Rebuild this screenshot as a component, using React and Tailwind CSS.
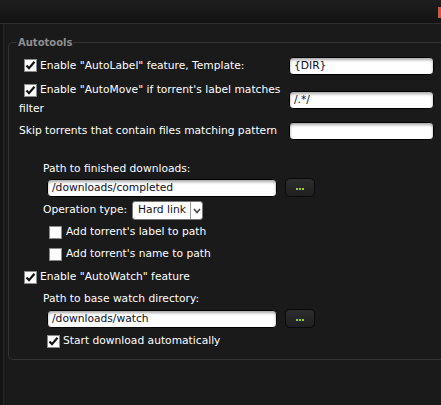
import React from "react";

function Check({ checked }) {
  return (
    <span className="inline-flex w-[13px] h-[13px] shrink-0 items-center justify-center bg-white border border-[#8a8a8a]">
      {checked && (
        <svg width="11" height="11" viewBox="0 0 11 11">
          <path d="M1.5 5.5 L4 8.2 L9.5 1.8" fill="none" stroke="#111" strokeWidth="2.2" />
        </svg>
      )}
    </span>
  );
}

function TextInput({ value, className }) {
  return (
    <div
      className={
        "h-[18px] shrink-0 rounded-[4px] bg-white border border-[#000] shadow-[inset_0_2px_3px_rgba(0,0,0,0.35)] pl-[4px] text-[#0c0c1c] leading-[16px] " +
        (className || "")
      }
    >
      {value}
    </div>
  );
}

function DotsButton() {
  return (
    <div className="w-[30px] h-[19px] rounded-[5px] bg-gradient-to-b from-[#2e2e2e] to-[#1f1f1f] border border-[#0a0a0a] flex items-center justify-center">
      <span className="flex gap-[1px] mt-[3px]">
        <span className="w-[2px] h-[2px] bg-[#9acd32]" />
        <span className="w-[2px] h-[2px] bg-[#9acd32]" />
        <span className="w-[2px] h-[2px] bg-[#9acd32]" />
      </span>
    </div>
  );
}

export default function App() {
  return (
    <div
      className="w-[441px] h-[405px] bg-[#141414] overflow-hidden text-[10.7px] text-white"
      style={{ fontFamily: "'DejaVu Sans', sans-serif" }}
    >
      <div className="h-[24px] bg-gradient-to-b from-[#1f1f1f] to-[#121212] border-b border-[#2e2e2e] flex justify-end items-start">
        <div className="w-[3px] h-[11px] mt-[7px] bg-[#d9523c]" />
      </div>
      <div className="flex h-[381px]">
        <div className="w-[3px] bg-[#141414]" />
        <div className="flex-1 bg-[#1a1a1a] border-l border-[#262626] pl-[4px] pt-[11px]">
          <fieldset className="border border-[#333] border-r-0 rounded-l-[5px] h-[325px] pl-[10px] pr-0 ml-0 mr-[-10px]">
            <legend className="px-[1px] ml-[-2px] text-[#8f8f8f] font-bold text-[10px]">Autotools</legend>
            <div className="flex flex-col">
              <div className="flex items-center mt-[7px] h-[18px]">
                <div className="w-[270px] flex items-center pl-[5px] gap-[3px]">
                  <Check checked />
                  <span>Enable "AutoLabel" feature, Template:</span>
                </div>
                <TextInput value="{DIR}" className="w-[145px]" />
              </div>
              <div className="flex items-center mt-[8px]">
                <div className="w-[270px] flex flex-col">
                  <div className="flex items-center pl-[5px] gap-[3px] h-[14px]">
                    <Check checked />
                    <span>Enable "AutoMove" if torrent's label matches</span>
                  </div>
                  <div className="h-[14px] mt-[5px] leading-[14px]">filter</div>
                </div>
                <TextInput value="/.*/" className="w-[145px]" />
              </div>
              <div className="flex items-center mt-[6px] h-[18px]">
                <div className="w-[270px]">Skip torrents that contain files matching pattern</div>
                <TextInput value="" className="w-[145px]" />
              </div>
              <div className="pl-[24px] mt-[22px] leading-[14px]">Path to finished downloads:</div>
              <div className="flex items-center pl-[28px] mt-[2px] gap-[8px]">
                <TextInput value="/downloads/completed" className="w-[230px]" />
                <DotsButton />
              </div>
              <div className="flex items-center pl-[24px] mt-[4px] gap-[5px] h-[19px]">
                <span>Operation type:</span>
                <div className="h-[19px] w-[71px] bg-white rounded-[3px] border border-[#777] flex items-center text-[#111]">
                  <span className="flex-1 pl-[5px]">Hard link</span>
                  <span className="w-[12px] h-[17px] border-l border-[#999] flex items-center justify-center">
                    <svg width="8" height="6" viewBox="0 0 8 6">
                      <path d="M1 1 L4 4.5 L7 1" fill="none" stroke="#444" strokeWidth="1.5" />
                    </svg>
                  </span>
                </div>
              </div>
              <div className="flex items-center pl-[30px] mt-[5px] gap-[4px] h-[14px]">
                <Check />
                <span>Add torrent's label to path</span>
              </div>
              <div className="flex items-center pl-[30px] mt-[8px] gap-[4px] h-[14px]">
                <Check />
                <span>Add torrent's name to path</span>
              </div>
              <div className="flex items-center pl-[5px] mt-[9px] gap-[3px] h-[14px]">
                <Check checked />
                <span>Enable "AutoWatch" feature</span>
              </div>
              <div className="pl-[24px] mt-[8px] leading-[14px]">Path to base watch directory:</div>
              <div className="flex items-center pl-[28px] mt-[3px] gap-[8px]">
                <TextInput value="/downloads/watch" className="w-[230px]" />
                <DotsButton />
              </div>
              <div className="flex items-center pl-[28px] mt-[6px] gap-[3px] h-[14px]">
                <Check checked />
                <span>Start download automatically</span>
              </div>
            </div>
          </fieldset>
        </div>
      </div>
    </div>
  );
}
